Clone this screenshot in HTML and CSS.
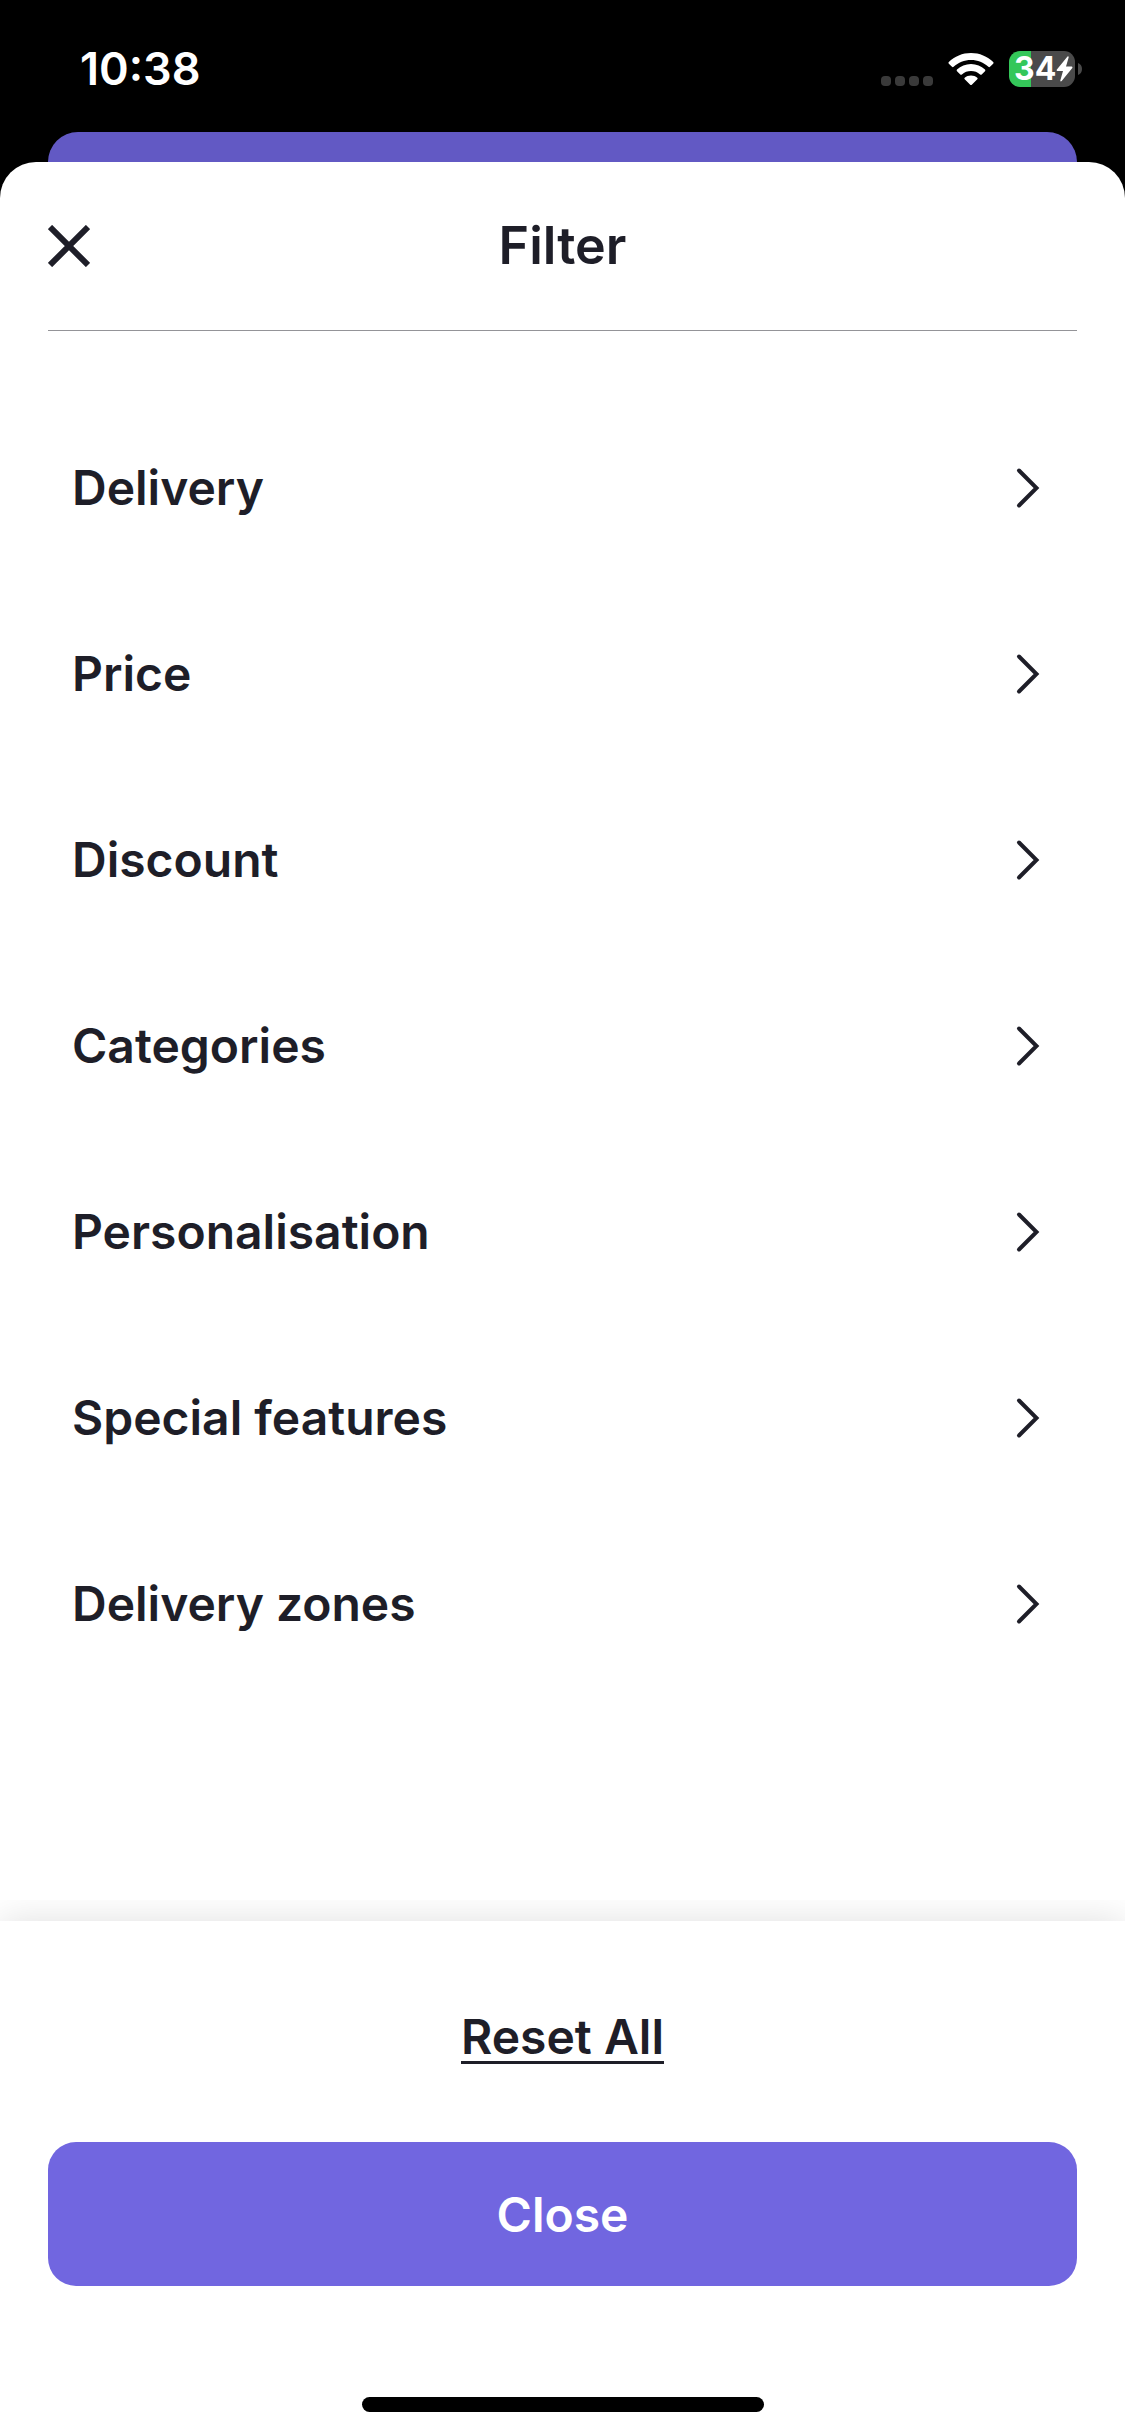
FILE: index.html
```
<!DOCTYPE html>
<html lang="en">
<head>
<meta charset="utf-8">
<meta name="viewport" content="width=device-width, initial-scale=1">
<title>Filter</title>
<link rel="stylesheet" href="styles.css">
</head>
<body>
<svg class="sprite" aria-hidden="true">
  <symbol id="chevron" viewBox="0 0 24 42"><path d="M3 3.500L20.500 21L3 38.500" fill="none" stroke="currentColor" stroke-width="4" stroke-linecap="round"/></symbol>
</svg>
<div class="status">
  <span class="time">10:38</span>
  <div class="indicators">
    <svg class="signal" viewBox="0 0 52 10" aria-hidden="true"><g fill="#3a3a3a"><rect width="10" height="10" rx="4"/><rect x="14" width="10" height="10" rx="4"/><rect x="28" width="10" height="10" rx="4"/><rect x="42" width="10" height="10" rx="4"/></g></svg>
    <svg class="wifi" viewBox="0 0 46 34" aria-hidden="true"><g fill="#fff"><path d="M23 1C14.500 1 6.500 4.400.800 10Q0 10.900.800 11.700L4 14.800Q4.800 15.500 5.600 14.800C10.300 10.400 16.300 8 23 8S35.700 10.400 40.400 14.800Q41.200 15.500 42 14.800L45.200 11.700Q46 10.900 45.200 10C39.500 4.400 31.500 1 23 1Z"/><path d="M23 12C17.600 12 12.700 14.100 9 17.500Q8.200 18.400 9 19.200L12.300 22.400Q13.100 23.100 13.900 22.400C16.400 20.200 19.500 19 23 19S29.600 20.200 32.100 22.400Q32.900 23.100 33.700 22.400L37 19.200Q37.800 18.400 37 17.500C33.300 14.100 28.400 12 23 12Z"/><path d="M23 23.500C20.500 23.500 18.500 24.300 16.700 25.700Q15.900 26.400 16.700 27.200L22.200 32.700Q23 33.500 23.800 32.700L29.300 27.200Q30.100 26.400 29.300 25.700C27.500 24.300 25.500 23.500 23 23.500Z"/></g></svg>
    <div class="battery">
      <div class="level"><span>34</span><svg class="bolt" viewBox="0 0 17 26" aria-hidden="true"><path d="M11.500.500L.700 13.700Q.200 14.800 1.300 15H7L4.300 24.500Q4.500 26 5.700 25L16.300 12Q16.900 10.800 15.700 10.600H10L12.700 1.200Q12.600 0 11.500.500Z" fill="#fff"/></svg></div>
      <svg class="cap" viewBox="0 0 4 12" aria-hidden="true"><path d="M0 0Q4 1.500 4 6T0 12Z" fill="#4a4a4a"/></svg>
    </div>
  </div>
</div>
<div class="behind"></div>
<main class="sheet">
  <header class="header">
    <button class="dismiss" type="button" aria-label="Dismiss"><svg viewBox="0 0 42 42" aria-hidden="true"><path d="M2 2L40 40M40 2L2 40" fill="none" stroke="currentColor" stroke-width="6"/></svg></button>
    <h1>Filter</h1>
  </header>
  <nav class="options">
    <button type="button">Delivery<svg aria-hidden="true"><use href="#chevron"/></svg></button>
    <button type="button">Price<svg aria-hidden="true"><use href="#chevron"/></svg></button>
    <button type="button">Discount<svg aria-hidden="true"><use href="#chevron"/></svg></button>
    <button type="button">Categories<svg aria-hidden="true"><use href="#chevron"/></svg></button>
    <button type="button">Personalisation<svg aria-hidden="true"><use href="#chevron"/></svg></button>
    <button type="button">Special features<svg aria-hidden="true"><use href="#chevron"/></svg></button>
    <button type="button">Delivery zones<svg aria-hidden="true"><use href="#chevron"/></svg></button>
  </nav>
  <footer class="footer">
    <button class="reset" type="button">Reset All</button>
    <button class="close" type="button">Close</button>
    <div class="home"></div>
  </footer>
</main>
</body>
</html>
```
FILE: styles.css
```
* { box-sizing: border-box; }

body {
  margin: 0;
  min-height: 100vh;
  display: flex;
  flex-direction: column;
  background: #000;
  color: #1e1e28;
  font-family: Inter, "Liberation Sans", sans-serif;
  font-weight: 600;
}

button {
  padding: 0;
  border: 0;
  background: none;
  color: inherit;
  font: inherit;
  cursor: pointer;
}

.sprite { display: none; }

.status {
  height: 132px;
  padding: 6px 43px 0 80px;
  display: flex;
  align-items: center;
  justify-content: space-between;
  color: #fff;
}

.time { font-size: 45px; line-height: 54px; }
.indicators { display: flex; align-items: center; gap: 15px; }
.signal { width: 52px; height: 10px; margin-top: 24px; }
.wifi { width: 46px; height: 34px; }
.battery { display: flex; align-items: center; gap: 3px; }

.level {
  width: 66px;
  height: 36px;
  padding-left: 5px;
  border-radius: 11px;
  display: flex;
  align-items: center;
  background: linear-gradient(90deg, #34c759 34%, #4a4a4a 34%);
  font-size: 32px;
  line-height: 36px;
  font-weight: 700;
}

.bolt { width: 17px; height: 26px; flex: none; }
.cap { width: 4px; height: 12px; }

.behind {
  height: 30px;
  margin: 0 48px;
  border-radius: 30px 30px 0 0;
  background: #6259c4;
}

.sheet {
  flex: 1;
  display: flex;
  flex-direction: column;
  border-radius: 36px 36px 0 0;
  background: #fff;
}

.header {
  height: 169px;
  margin: 0 48px;
  display: grid;
  grid-template-columns: 42px 1fr 42px;
  align-items: center;
  border-bottom: 1px solid #949498;
}

.header h1 {
  margin: 0;
  font-size: 52px;
  line-height: 64px;
  font-weight: 600;
  text-align: center;
}

.dismiss, .dismiss svg { display: block; width: 42px; height: 42px; }

.options {
  flex: 1;
  padding: 64px 85px 64px 72px;
  display: flex;
  flex-direction: column;
}

.options button {
  height: 186px;
  display: flex;
  align-items: center;
  justify-content: space-between;
  font-size: 48px;
  line-height: 60px;
  text-align: left;
}

.options svg { width: 24px; height: 42px; }

.footer {
  padding: 92px 48px 24px;
  display: flex;
  flex-direction: column;
  align-items: center;
  background: #fff;
  box-shadow: 0 0 36px rgba(0, 0, 0, 0.13);
  clip-path: inset(-21px 0 0 0);
}

.reset {
  border-bottom: 3px solid #1e1e28;
  font-size: 48px;
  line-height: 48px;
}

.close {
  width: 100%;
  height: 144px;
  margin: 78px 0 111px;
  border-radius: 28px;
  background: #7166e0;
  color: #fff;
  font-size: 48px;
}

.home {
  width: 402px;
  height: 15px;
  border-radius: 8px;
  background: #000;
}
```
